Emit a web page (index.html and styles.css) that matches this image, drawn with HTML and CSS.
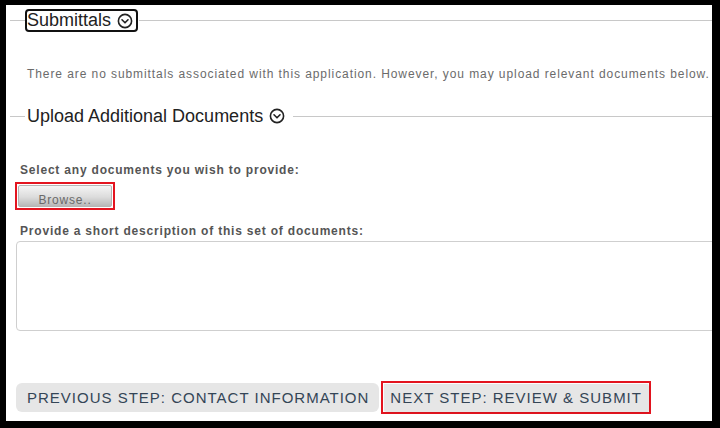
FILE: index.html
```html
<!DOCTYPE html>
<html lang="en">
<head>
    <meta charset="UTF-8">
    <meta name="viewport" content="width=device-width, initial-scale=1.0">
    <title>Submittals</title>
    <link rel="stylesheet" href="styles.css">
</head>
<body>
    <div class="screen">
        <section class="group">
            <div class="group-head head-first">
                <span class="rule rule-short"></span>
                <button type="button" class="toggle focused">
                    Submittals
                    <svg class="chev" viewBox="0 0 16 16"><circle cx="8" cy="8" r="6.6"/><polyline points="5,6.8 8,9.8 11,6.8"/></svg>
                </button>
                <span class="rule"></span>
            </div>
            <p class="note">There are no submittals associated with this application. However, you may upload relevant documents below.</p>
        </section>

        <section class="group">
            <div class="group-head head-second">
                <span class="rule rule-short"></span>
                <button type="button" class="toggle">
                    Upload Additional Documents
                    <svg class="chev" viewBox="0 0 16 16"><circle cx="8" cy="8" r="6.6"/><polyline points="5,6.8 8,9.8 11,6.8"/></svg>
                </button>
                <span class="rule"></span>
            </div>

            <label class="field-label label-files" for="files">Select any documents you wish to provide:</label>
            <div class="highlight browse-wrap">
                <button type="button" class="browse" id="files">Browse..</button>
            </div>

            <label class="field-label label-desc" for="desc">Provide a short description of this set of documents:</label>
            <textarea id="desc" class="desc"></textarea>
        </section>

        <div class="steps">
            <button type="button" class="step">Previous Step: Contact Information</button>
            <div class="highlight next-wrap">
                <button type="button" class="step step-next">Next Step: Review &amp; Submit</button>
            </div>
        </div>
    </div>
</body>
</html>
```

FILE: styles.css
```css
html, body {
    margin: 0;
    padding: 0;
    background: #000;
    overflow: hidden;
}

body {
    font-family: "Liberation Sans", Arial, sans-serif;
}

.screen {
    margin: 5px 8px 7px 6px;
    height: 416px;
    background: #fff;
    overflow: hidden;
}

.group-head {
    display: flex;
    align-items: center;
    width: 800px;
    margin-left: 4px;
}

.head-first {
    margin-top: 4px;
    height: 23px;
}

.head-second {
    margin-top: 22px;
    height: 24px;
}

.rule {
    flex: 1;
    height: 1px;
    background: #c8c8c8;
}

.rule-short {
    flex: none;
    width: 15px;
}

.toggle {
    display: flex;
    align-items: center;
    gap: 6px;
    height: 23px;
    padding: 0 3px 0 0;
    margin: 0 1px 0 0;
    border: 2px solid transparent;
    border-radius: 4px;
    background: none;
    font-family: inherit;
    font-size: 18px;
    color: #222;
    cursor: pointer;
}

.head-second .toggle {
    padding-right: 5px;
}

.toggle.focused {
    border-color: #111;
}

.chev {
    width: 16px;
    height: 16px;
    fill: none;
    stroke: #222;
    stroke-width: 1.6;
    stroke-linecap: round;
    stroke-linejoin: round;
}

.note {
    margin: 34px 0 0 21px;
    font-size: 12px;
    line-height: 16px;
    letter-spacing: 0.92px;
    color: #6b6b6b;
    white-space: nowrap;
}

.field-label {
    display: block;
    margin-left: 14px;
    font-size: 12px;
    line-height: 16px;
    font-weight: bold;
    letter-spacing: 0.8px;
    color: #555;
    white-space: nowrap;
}

.label-files {
    margin-top: 34px;
}

.label-desc {
    margin-top: 13px;
}

.highlight {
    border: 2px solid #e3141f;
    padding: 1px;
    box-sizing: border-box;
}

.browse-wrap {
    width: 100px;
    height: 28px;
    margin: 4px 0 0 9px;
}

.browse {
    display: block;
    width: 100%;
    height: 22px;
    border: 1px solid #b5b5b5;
    border-radius: 2px;
    background: linear-gradient(#f4f4f4, #dcdcdc 55%, #b8b8b8);
    font-family: inherit;
    font-size: 12px;
    letter-spacing: 0.8px;
    color: #6a6a6a;
    padding: 8px 0 0;
    line-height: 12px;
}

.desc {
    display: block;
    width: 760px;
    height: 90px;
    margin: 2px 0 0 10px;
    border: 1px solid #cfcfcf;
    border-radius: 4px;
    box-sizing: border-box;
    resize: none;
    font-family: inherit;
}

.steps {
    display: flex;
    align-items: center;
    gap: 2px;
    margin: 50px 0 0 10px;
}

.step {
    height: 29px;
    padding: 0 10px 0 11px;
    border: none;
    border-radius: 6px;
    background: #e6e6e6;
    font-family: inherit;
    font-size: 15px;
    letter-spacing: 1px;
    text-transform: uppercase;
    color: #344556;
    white-space: nowrap;
    cursor: pointer;
}

.next-wrap {
    height: 33px;
}

.step-next {
    height: 27px;
    border-radius: 0;
    padding: 0 6px;
    box-shadow: 1px 1px 2px rgba(0, 0, 0, 0.15);
}
```
